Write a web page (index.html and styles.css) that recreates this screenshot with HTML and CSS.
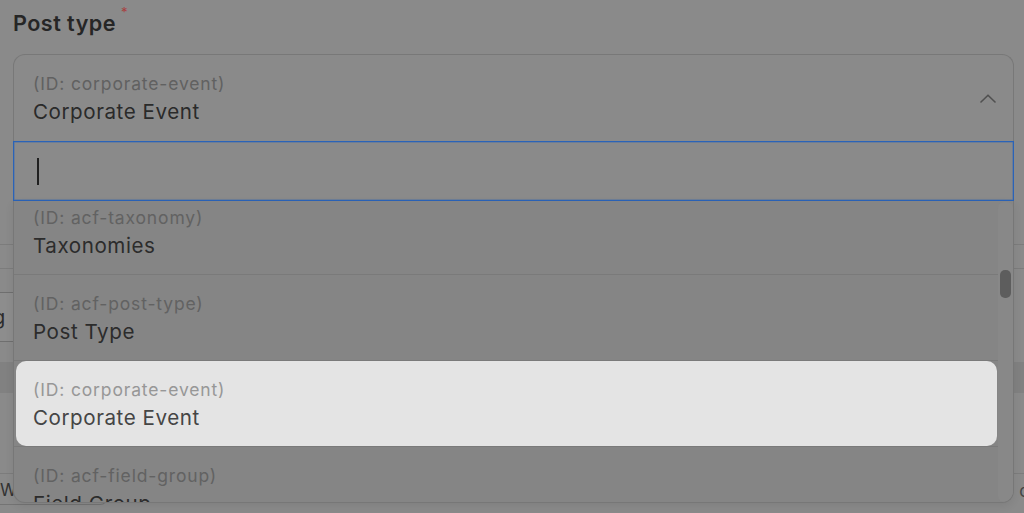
FILE: index.html
```html
<!DOCTYPE html>
<html lang="en">
<head>
<meta charset="utf-8">
<title>Post type select</title>
<link rel="stylesheet" href="styles.css">
</head>
<body>
<div class="page">
  <div class="field">
    <label class="label"><span class="label-text">Post type</span><span class="req">*</span></label>
    <div class="select">
      <div class="trigger">
        <div class="value">
          <div class="opt-id">(ID: corporate-event)</div>
          <div class="opt-name">Corporate Event</div>
        </div>
        <svg class="chevron" width="16" height="9" viewBox="0 0 16 9"><polyline points="1,8 8,1.2 15,8" fill="none" stroke="#505050" stroke-width="1.6" stroke-linecap="round" stroke-linejoin="round"/></svg>
      </div>
      <div class="dropdown">
        <div class="search"><span class="caret"></span></div>
        <div class="listbox">
          <div class="options">
            <div class="options-inner">
              <div class="opt"><div class="opt-inner"><div class="opt-id">(ID: acf-taxonomy)</div><div class="opt-name">Taxonomies</div></div></div>
              <div class="opt"><div class="opt-inner"><div class="opt-id">(ID: acf-post-type)</div><div class="opt-name">Post Type</div></div></div>
              <div class="opt active"><div class="opt-inner"><div class="opt-id">(ID: corporate-event)</div><div class="opt-name">Corporate Event</div></div></div>
              <div class="opt"><div class="opt-inner"><div class="opt-id">(ID: acf-field-group)</div><div class="opt-name">Field Group</div></div></div>
            </div>
          </div>
          <div class="scrollbar"><div class="thumb"></div></div>
        </div>
      </div>
    </div>
  </div>
  <div class="under">
    <div class="under-row"></div>
    <div class="under-row"></div>
    <div class="under-input"><span>Listing</span></div>
    <div class="under-band"></div>
    <div class="under-foot">
      <div class="under-btn">W</div>
      <span class="under-tail">c</span>
    </div>
  </div>
</div>
</body>
</html>
```

FILE: styles.css
```css
html, body {
  margin: 0;
  padding: 0;
  background: #8a8a8a;
  font-family: Inter, "Noto Sans", "Liberation Sans", sans-serif;
  overflow: hidden;
  height: 513px;
}

.page {
  width: 1024px;
}

.field {
  padding: 11px 10px 0 13px;
  position: relative;
  z-index: 2;
}

.label {
  display: flex;
  align-items: flex-start;
  height: 24px;
}

.label-text {
  font-size: 21.6px;
  line-height: 24px;
  font-weight: 600;
  color: #262626;
  letter-spacing: 0.45px;
}

.req {
  color: #a8403f;
  font-size: 13px;
  line-height: 13px;
  font-weight: 400;
  margin: -5px 0 0 5px;
}

.select {
  margin-top: 19px;
  position: relative;
}

.trigger {
  height: 86px;
  border: 1px solid #787878;
  border-bottom: 0;
  border-radius: 12px 12px 0 0;
  display: flex;
  align-items: center;
  padding: 0 17px 0 19px;
}

.value {
  flex: 1;
  margin-top: 1px;
}

.opt-id {
  font-size: 17.5px;
  line-height: 24px;
  letter-spacing: 0.85px;
  color: #616161;
}

.opt-name {
  font-size: 20.6px;
  line-height: 28px;
  letter-spacing: 0.55px;
  margin-top: 2px;
  color: #2a2a2a;
}

.chevron {
  display: block;
  margin-top: 1px;
}

.dropdown {
  position: absolute;
  top: 100%;
  left: 0;
  right: 0;
}

.search {
  height: 58px;
  border: 1px solid #2a63b8;
  box-shadow: inset 0 0 0 0.5px rgba(42, 99, 184, 0.6);
  display: flex;
  align-items: center;
  padding-left: 23px;
}

.caret {
  display: block;
  width: 1.5px;
  height: 27px;
  background: #202020;
  margin-top: 1px;
}

.listbox {
  height: 301px;
  background: #858585;
  border: 1px solid #777777;
  border-top: 0;
  border-radius: 0 0 12px 12px;
  display: flex;
  overflow: hidden;
  box-shadow: 0 3px 8px rgba(0, 0, 0, 0.08);
}

.options {
  flex: 1;
  overflow: hidden;
}

.options-inner {
  margin-top: -12px;
}

.opt {
  border-bottom: 1px solid #7a7a7a;
  padding: 0 1px 0 2px;
}

.opt-inner {
  padding: 17px 0 14px 17px;
  border-radius: 10px;
}

.opt .opt-id {
  color: #626262;
}

.opt .opt-name {
  color: #2c2c2c;
}

.opt.active .opt-inner {
  background: #e4e4e4;
}

.opt.active .opt-id {
  color: #979797;
}

.opt.active .opt-name {
  color: #454545;
}

.scrollbar {
  width: 15px;
  margin: 1px 0 0 0;
  background: #888888;
  border-radius: 7px 7px 10px 7px;
  padding: 68px 2px 0 2px;
  box-sizing: border-box;
}

.thumb {
  height: 28px;
  background: #5d5d5d;
  border-radius: 5px;
}

/* page content beneath the overlay */
.under {
  position: relative;
  z-index: 1;
  padding-top: 80px;
}

.under-row {
  height: 23px;
  border-bottom: 1px solid #7c7c7c;
}

.under-input {
  margin: 23px 0 0 -60px;
  width: 400px;
  height: 48px;
  border: 1px solid #6f6f6f;
  border-radius: 4px;
  display: flex;
  align-items: center;
  font-size: 20px;
  color: #2c2c2c;
  background: #8d8d8d;
}

.under-input span {
  padding-left: 2px;
}

.under-band {
  height: 31px;
  margin-top: 20px;
  background: #818181;
}

.under-foot {
  margin-top: 80px;
  border-top: 1px solid #7c7c7c;
  padding-top: 3px;
  display: flex;
  justify-content: space-between;
  align-items: center;
}

.under-btn {
  margin-left: -20px;
  width: 128px;
  height: 28px;
  border: 1px solid #747474;
  border-top: 0;
  border-radius: 0 0 8px 8px;
  font-size: 17px;
  line-height: 26px;
  color: #333;
  padding-left: 19px;
  box-sizing: border-box;
}

.under-tail {
  font-size: 17px;
  color: #444;
  margin-right: -5px;
}
```
